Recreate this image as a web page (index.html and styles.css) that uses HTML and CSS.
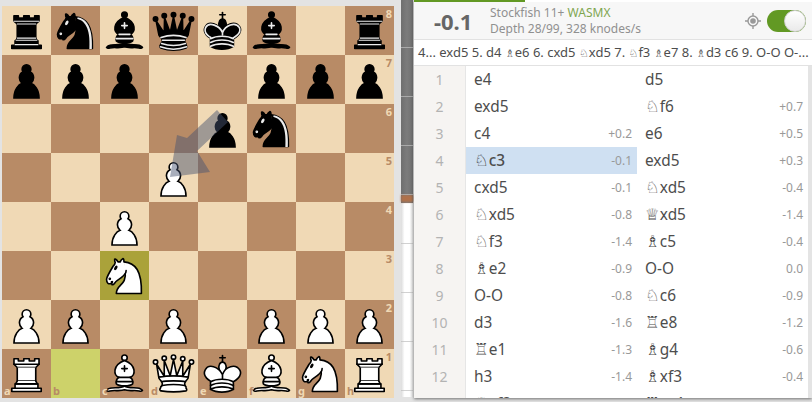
FILE: index.html
```html
<!DOCTYPE html>
<html lang="en">
<head>
    <meta charset="UTF-8">
    <title>Analysis board</title>
    <link rel="stylesheet" href="styles.css">
</head>
<body>
    <svg class="defs" width="0" height="0">
        <defs>
            <symbol id="wp" viewBox="0 0 45 45"><path d="M22.5 9c-2.21 0-4 1.79-4 4 0 .89.29 1.71.78 2.38C17.33 16.5 16 18.59 16 21c0 2.03.94 3.84 2.41 5.03-3 1.06-7.41 5.55-7.41 13.47h23c0-7.92-4.41-12.41-7.41-13.47 1.47-1.19 2.41-3 2.41-5.03 0-2.41-1.33-4.5-3.28-5.62.49-.67.78-1.49.78-2.38 0-2.21-1.79-4-4-4z" fill="#fff" stroke="#000" stroke-width="1.5" stroke-linecap="round"/></symbol>
            <symbol id="bp" viewBox="0 0 45 45"><path d="M22.5 9c-2.21 0-4 1.79-4 4 0 .89.29 1.71.78 2.38C17.33 16.5 16 18.59 16 21c0 2.03.94 3.84 2.41 5.03-3 1.06-7.41 5.55-7.41 13.47h23c0-7.92-4.41-12.41-7.41-13.47 1.47-1.19 2.41-3 2.41-5.03 0-2.41-1.33-4.5-3.28-5.62.49-.67.78-1.49.78-2.38 0-2.21-1.79-4-4-4z" stroke="#000" stroke-width="1.5" stroke-linecap="round"/></symbol>
            <symbol id="wr" viewBox="0 0 45 45"><g fill="#fff" fill-rule="evenodd" stroke="#000" stroke-width="1.5" stroke-linecap="round" stroke-linejoin="round"><path d="M9 39h27v-3H9v3zM12 36v-4h21v4H12zM11 14V9h4v2h5V9h5v2h5V9h4v5" stroke-linecap="butt"/><path d="M34 14l-3 3H14l-3-3"/><path d="M31 17v12.5H14V17" stroke-linecap="butt" stroke-linejoin="miter"/><path d="M31 29.5l1.5 2.5h-20l1.5-2.5"/><path d="M11 14h23" fill="none" stroke-linejoin="miter"/></g></symbol>
            <symbol id="br" viewBox="0 0 45 45"><g fill-rule="evenodd" stroke="#000" stroke-width="1.5" stroke-linecap="round" stroke-linejoin="round"><path d="M9 39h27v-3H9v3zM12.5 32l1.5-2.5h17l1.5 2.5h-20zM12 36v-4h21v4H12z" stroke-linecap="butt"/><path d="M14 29.5v-13h17v13H14z" stroke-linecap="butt" stroke-linejoin="miter"/><path d="M14 16.5L11 14h23l-3 2.5H14zM11 14V9h4v2h5V9h5v2h5V9h4v5H11z" stroke-linecap="butt"/><path d="M12 35.5h21M13 31.5h19M14 29.5h17M14 16.5h17M11 14h23" fill="none" stroke="#ececec" stroke-width="1" stroke-linejoin="miter"/></g></symbol>
            <symbol id="wn" viewBox="0 0 45 45"><g fill="none" fill-rule="evenodd" stroke="#000" stroke-width="1.5" stroke-linecap="round" stroke-linejoin="round"><path d="M22 10c10.5 1 16.5 8 16 29H15c0-9 10-6.5 8-21" fill="#fff"/><path d="M24 18c.38 2.91-5.55 7.37-8 9-3 2-2.82 4.34-5 4-1.042-.94 1.41-3.04 0-3-1 0 .19 1.23-1 2-1 0-4.003 1-4-4 0-2 6-12 6-12s1.89-1.9 2-3.5c-.73-.994-.5-2-.5-3 1-1 3 2.5 3 2.5h2s.78-1.992 2.5-3c1 0 1 3 1 3" fill="#fff"/><path d="M9.5 25.5a.5.5 0 1 1-1 0 .5.5 0 1 1 1 0zm5.433-9.75a.5 1.5 30 1 1-.866-.5.5 1.5 30 1 1 .866.5z" fill="#000"/></g></symbol>
            <symbol id="bn" viewBox="0 0 45 45"><g fill="none" fill-rule="evenodd" stroke="#000" stroke-width="1.5" stroke-linecap="round" stroke-linejoin="round"><path d="M22 10c10.5 1 16.5 8 16 29H15c0-9 10-6.5 8-21" fill="#000"/><path d="M24 18c.38 2.91-5.55 7.37-8 9-3 2-2.82 4.34-5 4-1.042-.94 1.41-3.04 0-3-1 0 .19 1.23-1 2-1 0-4.003 1-4-4 0-2 6-12 6-12s1.89-1.9 2-3.5c-.73-.994-.5-2-.5-3 1-1 3 2.5 3 2.5h2s.78-1.992 2.5-3c1 0 1 3 1 3" fill="#000"/><path d="M9.5 25.5a.5.5 0 1 1-1 0 .5.5 0 1 1 1 0zm5.433-9.75a.5 1.5 30 1 1-.866-.5.5 1.5 30 1 1 .866.5z" fill="#ececec" stroke="#ececec"/><path d="M24.55 10.4l-.45 1.45.5.15c3.15 1 5.65 2.49 7.9 6.75S35.75 29.06 35.25 39l-.05.5h2.25l.05-.5c.5-10.06-.88-16.85-3.25-21.34-2.37-4.49-5.79-6.64-9.19-7.16l-.51-.1z" fill="#ececec" stroke="none"/></g></symbol>
            <symbol id="wb" viewBox="0 0 45 45"><g fill="none" fill-rule="evenodd" stroke="#000" stroke-width="1.5" stroke-linecap="round" stroke-linejoin="round"><g fill="#fff" stroke-linecap="butt"><path d="M9 36c3.39-.97 10.11.43 13.5-2 3.39 2.43 10.11 1.03 13.5 2 0 0 1.65.54 3 2-.68.97-1.65.99-3 .5-3.39-.97-10.11.46-13.5-1-3.39 1.46-10.11.03-13.5 1-1.354.49-2.323.47-3-.5 1.354-1.94 3-2 3-2z"/><path d="M15 32c2.5 2.5 12.5 2.5 15 0 .5-1.5 0-2 0-2 0-2.5-2.5-4-2.5-4 5.5-1.5 6-11.5-5-15.5-11 4-10.5 14-5 15.5 0 0-2.5 1.5-2.5 4 0 0-.5.5 0 2z"/><path d="M25 8a2.5 2.5 0 1 1-5 0 2.5 2.5 0 1 1 5 0z"/></g><path d="M17.5 26h10M15 30h15m-7.5-14.5v5M20 18h5" stroke-linejoin="miter"/></g></symbol>
            <symbol id="bb" viewBox="0 0 45 45"><g fill="none" fill-rule="evenodd" stroke="#000" stroke-width="1.5" stroke-linecap="round" stroke-linejoin="round"><g fill="#000" stroke-linecap="butt"><path d="M9 36c3.39-.97 10.11.43 13.5-2 3.39 2.43 10.11 1.03 13.5 2 0 0 1.65.54 3 2-.68.97-1.65.99-3 .5-3.39-.97-10.11.46-13.5-1-3.39 1.46-10.11.03-13.5 1-1.354.49-2.323.47-3-.5 1.354-1.94 3-2 3-2z"/><path d="M15 32c2.5 2.5 12.5 2.5 15 0 .5-1.5 0-2 0-2 0-2.5-2.5-4-2.5-4 5.5-1.5 6-11.5-5-15.5-11 4-10.5 14-5 15.5 0 0-2.5 1.5-2.5 4 0 0-.5.5 0 2z"/><path d="M25 8a2.5 2.5 0 1 1-5 0 2.5 2.5 0 1 1 5 0z"/></g><path d="M17.5 26h10M15 30h15m-7.5-14.5v5M20 18h5" stroke="#ececec" stroke-linejoin="miter"/></g></symbol>
            <symbol id="wq" viewBox="0 0 45 45"><g fill="#fff" fill-rule="evenodd" stroke="#000" stroke-width="1.5" stroke-linecap="round" stroke-linejoin="round"><path d="M8 12a2 2 0 1 1-4 0 2 2 0 1 1 4 0zM24.5 7.5a2 2 0 1 1-4 0 2 2 0 1 1 4 0zM41 12a2 2 0 1 1-4 0 2 2 0 1 1 4 0zM16 8.5a2 2 0 1 1-4 0 2 2 0 1 1 4 0zM33 9a2 2 0 1 1-4 0 2 2 0 1 1 4 0z"/><path d="M9 26c8.5-1.5 21-1.5 27 0l2-12-7 11V11l-5.5 13.5-3-15-3 15-5.5-14V25L7 14l2 12z" stroke-linecap="butt"/><path d="M9 26c0 2 1.5 2 2.5 4 1 1.5 1 1 .5 3.5-1.5 1-1.5 2.5-1.5 2.5-1.5 1.5.5 2.5.5 2.5 6.5 1 16.5 1 23 0 0 0 1.5-1 0-2.5 0 0 .5-1.5-1-2.5-.5-2.5-.5-2 .5-3.5 1-2 2.5-2 2.5-4-8.5-1.5-18.5-1.5-27 0z" stroke-linecap="butt"/><path d="M11.5 30c3.5-1 18.5-1 22 0M12 33.5c6-1 15-1 21 0" fill="none"/></g></symbol>
            <symbol id="bq" viewBox="0 0 45 45"><g fill-rule="evenodd" stroke="#000" stroke-width="1.5" stroke-linecap="round" stroke-linejoin="round"><g stroke="none"><circle cx="6" cy="12" r="2.75"/><circle cx="14" cy="9" r="2.75"/><circle cx="22.5" cy="8" r="2.75"/><circle cx="31" cy="9" r="2.75"/><circle cx="39" cy="12" r="2.75"/></g><path d="M9 26c8.5-1.5 21-1.5 27 0l2.5-12.5L31 25l-.3-14.1-5.2 13.6-3-14.5-3 14.5-5.2-13.6L14 25 6.5 13.5 9 26z" stroke-linecap="butt"/><path d="M9 26c0 2 1.5 2 2.5 4 1 1.5 1 1 .5 3.5-1.5 1-1.5 2.5-1.5 2.5-1.5 1.5.5 2.5.5 2.5 6.5 1 16.5 1 23 0 0 0 1.5-1 0-2.5 0 0 .5-1.5-1-2.5-.5-2.5-.5-2 .5-3.5 1-2 2.5-2 2.5-4-8.5-1.5-18.5-1.5-27 0z" stroke-linecap="butt"/><path d="M11 38.5a35 35 1 0 0 23 0" fill="none" stroke-linecap="butt"/><path d="M11 29a35 35 1 0 1 23 0M12.5 31.5h20M11.5 34.5a35 35 1 0 0 22 0M10.5 37.5a35 35 1 0 0 24 0" fill="none" stroke="#ececec"/></g></symbol>
            <symbol id="wk" viewBox="0 0 45 45"><g fill="none" fill-rule="evenodd" stroke="#000" stroke-width="1.5" stroke-linecap="round" stroke-linejoin="round"><path d="M22.5 11.63V6M20 8h5" stroke-linejoin="miter"/><path d="M22.5 25s4.5-7.5 3-10.5c0 0-1-2.5-3-2.5s-3 2.5-3 2.5c-1.5 3 3 10.5 3 10.5" fill="#fff" stroke-linecap="butt" stroke-linejoin="miter"/><path d="M11.5 37c5.5 3.5 15.5 3.5 21 0v-7s9-4.5 6-10.5c-4-6.5-13.5-3.5-16 4V27v-3.5c-3.5-7.5-13-10.5-16-4-3 6 5 10 5 10V37z" fill="#fff"/><path d="M11.5 30c5.5-3 15.5-3 21 0m-21 3.5c5.5-3 15.5-3 21 0m-21 3.5c5.5-3 15.5-3 21 0"/></g></symbol>
            <symbol id="bk" viewBox="0 0 45 45"><g fill="none" fill-rule="evenodd" stroke="#000" stroke-width="1.5" stroke-linecap="round" stroke-linejoin="round"><path d="M22.5 11.63V6" stroke-linejoin="miter"/><path d="M22.5 25s4.5-7.5 3-10.5c0 0-1-2.5-3-2.5s-3 2.5-3 2.5c-1.5 3 3 10.5 3 10.5" fill="#000" stroke-linecap="butt" stroke-linejoin="miter"/><path d="M11.5 37c5.5 3.5 15.5 3.5 21 0v-7s9-4.5 6-10.5c-4-6.5-13.5-3.5-16 4V27v-3.5c-3.5-7.5-13-10.5-16-4-3 6 5 10 5 10V37z" fill="#000"/><path d="M20 8h5" stroke-linejoin="miter"/><path d="M32 29.5s8.5-4 6.03-9.65C34.15 14 25 18 22.5 24.5l.01 2.1-.01-2.1C20 18 9.906 14 6.997 19.85c-2.497 5.65 4.853 9 4.853 9" stroke="#ececec"/><path d="M11.5 30c5.5-3 15.5-3 21 0m-21 3.5c5.5-3 15.5-3 21 0m-21 3.5c5.5-3 15.5-3 21 0" stroke="#ececec"/></g></symbol>
        </defs>
    </svg>

    <div class="app">
        <div class="board">
            <!-- rank 8 -->
            <div class="sq light"><svg class="pc"><use href="#br"/></svg></div>
            <div class="sq dark"><svg class="pc"><use href="#bn"/></svg></div>
            <div class="sq light"><svg class="pc"><use href="#bb"/></svg></div>
            <div class="sq dark"><svg class="pc"><use href="#bq"/></svg></div>
            <div class="sq light"><svg class="pc"><use href="#bk"/></svg></div>
            <div class="sq dark"><svg class="pc"><use href="#bb"/></svg></div>
            <div class="sq light"></div>
            <div class="sq dark"><svg class="pc"><use href="#br"/></svg><span class="rank">8</span></div>
            <!-- rank 7 -->
            <div class="sq dark"><svg class="pc"><use href="#bp"/></svg></div>
            <div class="sq light"><svg class="pc"><use href="#bp"/></svg></div>
            <div class="sq dark"><svg class="pc"><use href="#bp"/></svg></div>
            <div class="sq light"></div>
            <div class="sq dark"></div>
            <div class="sq light"><svg class="pc"><use href="#bp"/></svg></div>
            <div class="sq dark"><svg class="pc"><use href="#bp"/></svg></div>
            <div class="sq light"><svg class="pc"><use href="#bp"/></svg><span class="rank">7</span></div>
            <!-- rank 6 -->
            <div class="sq light"></div>
            <div class="sq dark"></div>
            <div class="sq light"></div>
            <div class="sq dark"></div>
            <div class="sq light"><svg class="pc"><use href="#bp"/></svg></div>
            <div class="sq dark"><svg class="pc"><use href="#bn"/></svg></div>
            <div class="sq light"></div>
            <div class="sq dark"><span class="rank">6</span></div>
            <!-- rank 5 -->
            <div class="sq dark"></div>
            <div class="sq light"></div>
            <div class="sq dark"></div>
            <div class="sq light"><svg class="pc"><use href="#wp"/></svg></div>
            <div class="sq dark"></div>
            <div class="sq light"></div>
            <div class="sq dark"></div>
            <div class="sq light"><span class="rank">5</span></div>
            <!-- rank 4 -->
            <div class="sq light"></div>
            <div class="sq dark"></div>
            <div class="sq light"><svg class="pc"><use href="#wp"/></svg></div>
            <div class="sq dark"></div>
            <div class="sq light"></div>
            <div class="sq dark"></div>
            <div class="sq light"></div>
            <div class="sq dark"><span class="rank">4</span></div>
            <!-- rank 3 -->
            <div class="sq dark"></div>
            <div class="sq light"></div>
            <div class="sq last-dark"><svg class="pc"><use href="#wn"/></svg></div>
            <div class="sq light"></div>
            <div class="sq dark"></div>
            <div class="sq light"></div>
            <div class="sq dark"></div>
            <div class="sq light"><span class="rank">3</span></div>
            <!-- rank 2 -->
            <div class="sq light"><svg class="pc"><use href="#wp"/></svg></div>
            <div class="sq dark"><svg class="pc"><use href="#wp"/></svg></div>
            <div class="sq light"></div>
            <div class="sq dark"><svg class="pc"><use href="#wp"/></svg></div>
            <div class="sq light"></div>
            <div class="sq dark"><svg class="pc"><use href="#wp"/></svg></div>
            <div class="sq light"><svg class="pc"><use href="#wp"/></svg></div>
            <div class="sq dark"><svg class="pc"><use href="#wp"/></svg><span class="rank">2</span></div>
            <!-- rank 1 -->
            <div class="sq dark"><svg class="pc"><use href="#wr"/></svg><span class="file">a</span></div>
            <div class="sq last-light"><span class="file">b</span></div>
            <div class="sq dark"><svg class="pc"><use href="#wb"/></svg><span class="file">c</span></div>
            <div class="sq light"><svg class="pc"><use href="#wq"/></svg><span class="file">d</span></div>
            <div class="sq dark"><svg class="pc"><use href="#wk"/></svg><span class="file">e</span></div>
            <div class="sq light"><svg class="pc"><use href="#wb"/></svg><span class="file">f</span></div>
            <div class="sq dark"><svg class="pc"><use href="#wn"/></svg><span class="file">g</span></div>
            <div class="sq light"><svg class="pc"><use href="#wr"/></svg><span class="file">h</span><span class="rank">1</span></div>

            <!-- best move arrow, e6 to d5 -->
            <svg class="arrow" width="392" height="392" viewBox="0 0 392 392">
                <polygon points="226,116 195,145 208,166 168,171 175,129 185,132 215,104"/>
            </svg>
        </div>

        <div class="gauge">
            <div class="gauge-fill"></div>
            <div class="gauge-mid"></div>
        </div>

        <div class="panel">
            <div class="progress"></div>
            <div class="ceval">
                <div class="score">-0.1</div>
                <div class="engine">
                    <div>Stockfish 11+ <span class="wasm">WASMX</span></div>
                    <div>Depth 28/99, 328 knodes/s</div>
                </div>
                <svg class="target" width="16" height="16" viewBox="0 0 16 16">
                    <circle cx="8" cy="8" r="5" fill="none" stroke="#999" stroke-width="1.4"/>
                    <circle cx="8" cy="8" r="2.8" fill="#999"/>
                    <path d="M8 0v3M8 13v3M0 8h3M13 8h3" stroke="#999" stroke-width="1.4"/>
                </svg>
                <div class="toggle"><div class="knob"></div></div>
            </div>
            <div class="pv">4... exd5 5. d4 <i>♗</i>e6 6. cxd5 <i>♘</i>xd5 7. <i>♘</i>f3 <i>♗</i>e7 8. <i>♗</i>d3 c6 9. O-O O-...</div>
            <div class="moves">
                <div class="num">1</div><div class="move">e4</div><div class="move">d5</div>
                <div class="num">2</div><div class="move">exd5</div><div class="move"><i>♘</i>f6<span class="ev">+0.7</span></div>
                <div class="num">3</div><div class="move">c4<span class="ev">+0.2</span></div><div class="move">e6<span class="ev">+0.5</span></div>
                <div class="num">4</div><div class="move active"><i>♘</i>c3<span class="ev">-0.1</span></div><div class="move">exd5<span class="ev">+0.3</span></div>
                <div class="num">5</div><div class="move">cxd5<span class="ev">-0.1</span></div><div class="move"><i>♘</i>xd5<span class="ev">-0.4</span></div>
                <div class="num">6</div><div class="move"><i>♘</i>xd5<span class="ev">-0.8</span></div><div class="move"><i>♕</i>xd5<span class="ev">-1.4</span></div>
                <div class="num">7</div><div class="move"><i>♘</i>f3<span class="ev">-1.4</span></div><div class="move"><i>♗</i>c5<span class="ev">-0.4</span></div>
                <div class="num">8</div><div class="move"><i>♗</i>e2<span class="ev">-0.9</span></div><div class="move">O-O<span class="ev">0.0</span></div>
                <div class="num">9</div><div class="move">O-O<span class="ev">-0.8</span></div><div class="move"><i>♘</i>c6<span class="ev">-0.9</span></div>
                <div class="num">10</div><div class="move">d3<span class="ev">-1.6</span></div><div class="move"><i>♖</i>e8<span class="ev">-1.2</span></div>
                <div class="num">11</div><div class="move"><i>♖</i>e1<span class="ev">-1.3</span></div><div class="move"><i>♗</i>g4<span class="ev">-0.6</span></div>
                <div class="num">12</div><div class="move">h3<span class="ev">-1.4</span></div><div class="move"><i>♗</i>xf3<span class="ev">-0.4</span></div>
                <div class="num">13</div><div class="move"><i>♕</i>xf3</div><div class="move"><i>♖</i>xe1</div>
            </div>
            <div class="scrollbar"></div>
        </div>
    </div>
</body>
</html>
```

FILE: styles.css
```css
html, body {
    margin: 0;
    height: 402px;
    overflow: hidden;
}
body {
    font-family: 'Noto Sans', 'DejaVu Sans', sans-serif;
    background: #e3e3e3;
    color: #4d4d4d;
}
.defs {
    position: absolute;
}
.app {
    display: flex;
    align-items: flex-start;
    height: 402px;
}
.board {
    position: relative;
    display: grid;
    grid-template-columns: repeat(8, 49px);
    grid-template-rows: repeat(8, 49px);
    flex: none;
    margin: 6px 0 0 2px;
}
.sq {
    position: relative;
}
.light {
    background: #f0d9b5;
}
.dark {
    background: #b88b66;
}
.last-light {
    background: #cdd26a;
}
.last-dark {
    background: #aaa23a;
}
.pc {
    display: block;
    width: 49px;
    height: 49px;
}
.rank, .file {
    position: absolute;
    font-size: 11px;
    font-weight: 700;
    line-height: 12px;
}
.rank {
    top: 2px;
    right: 2px;
}
.file {
    bottom: 1px;
    left: 2px;
}
.light .rank, .light .file, .last-light .file {
    color: #b88b66;
}
.dark .rank, .dark .file {
    color: #f0d9b5;
}
.arrow {
    position: absolute;
    top: 0;
    left: 0;
}
.arrow polygon {
    fill: rgba(72, 84, 112, 0.48);
}
.gauge {
    position: relative;
    flex: none;
    width: 12px;
    height: 397px;
    margin-left: 7px;
    background: linear-gradient(90deg, #dcdcdc, #fff 30%, #fff 70%, #dcdcdc);
}
.gauge-fill {
    height: 203px;
    background: linear-gradient(90deg, #6f6f6f, #7c7c7c 50%, #6f6f6f);
}
.gauge::after {
    content: '';
    position: absolute;
    inset: 0;
    background: repeating-linear-gradient(180deg, transparent 0, transparent 47px, rgba(190, 190, 190, 0.7) 47px, rgba(190, 190, 190, 0.7) 48px, transparent 48px, transparent 49px);
}
.gauge-mid {
    position: absolute;
    top: 195px;
    left: 0;
    right: 0;
    height: 7px;
    background: #b0714a;
    filter: blur(1px);
}
.panel {
    position: relative;
    flex: none;
    width: 398px;
    height: 398px;
    margin-left: 1px;
    overflow: hidden;
    background: #fff;
    box-shadow: 0 1px 3px rgba(0, 0, 0, 0.5);
}
.progress {
    width: 111px;
    height: 2px;
    background: #629924;
}
.ceval {
    display: flex;
    align-items: center;
    height: 37px;
    background: #f7f7f7;
    border-bottom: 1px solid #e2e2e2;
}
.score {
    width: 76px;
    padding-left: 20px;
    box-sizing: border-box;
    font-size: 22px;
    font-weight: 700;
    color: #666;
}
.engine {
    flex: 1;
    font-size: 12px;
    line-height: 16px;
    color: #909090;
}
.wasm {
    color: #7fa650;
}
.target {
    margin-right: 6px;
}
.toggle {
    display: flex;
    justify-content: flex-end;
    width: 39px;
    height: 22px;
    margin-right: 6px;
    border-radius: 11px;
    background: #629924;
}
.knob {
    width: 20px;
    height: 20px;
    border: 1px solid #d0d0d0;
    border-radius: 50%;
    background: linear-gradient(180deg, #fff, #eaeaea);
}
.pv {
    height: 25px;
    padding: 0 5px 0 4px;
    white-space: nowrap;
    font-size: 13px;
    line-height: 25px;
    color: #4d4d4d;
    border-bottom: 1px solid #e2e2e2;
}
.pv i {
    font-size: 11px;
}
.moves {
    display: grid;
    grid-template-columns: 52px 171px 171px;
    grid-auto-rows: 27px;
}
.num {
    text-align: center;
    font-size: 14px;
    line-height: 27px;
    color: #b3b3b3;
    background: #f6f4f2;
    border-right: 1px solid #e6e6e6;
}
.move {
    display: flex;
    align-items: center;
    padding: 0 5px 0 8px;
    font-size: 15.4px;
    color: #4d4d4d;
}
.move i {
    font-size: 16.5px;
    line-height: 20px;
}
.active {
    background: #cfe0f2;
    font-weight: 500;
}
.active i {
    color: #222;
}
i {
    font-family: 'DejaVu Sans', sans-serif;
    font-style: normal;
    font-weight: 400;
}
.ev {
    margin-left: auto;
    font-size: 12px;
    font-weight: 400;
    color: #999;
}
.scrollbar {
    position: absolute;
    top: 66px;
    right: 0;
    bottom: 0;
    width: 4px;
    background: #e4e4e4;
}
```
